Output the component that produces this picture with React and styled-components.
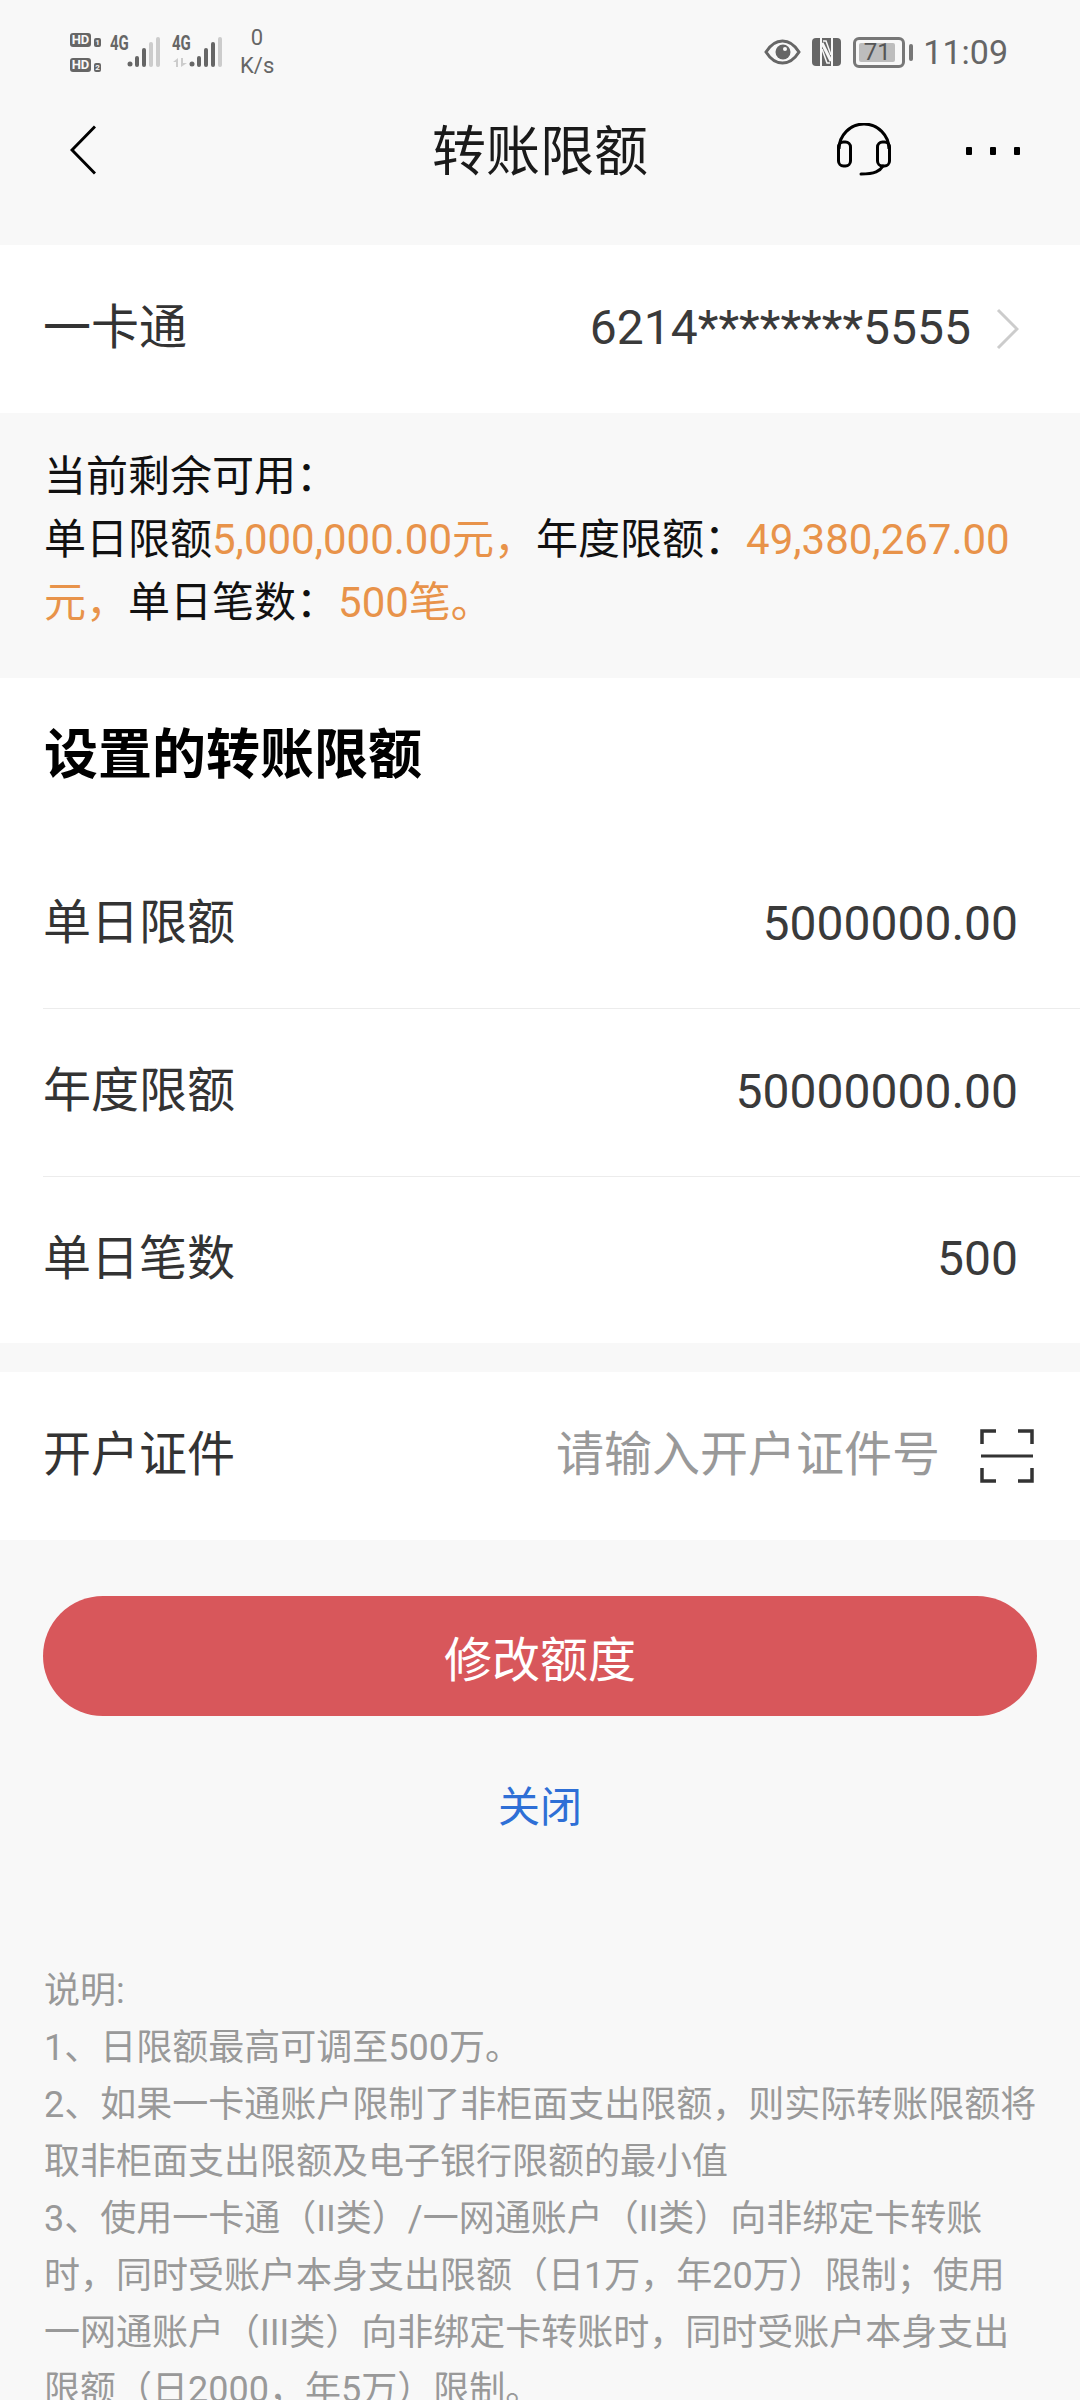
import React from "react";
import styled, { createGlobalStyle } from "styled-components";

const GlobalStyle = createGlobalStyle`
  html, body {
    margin: 0;
    padding: 0;
    background: #f8f8f8;
  }
  * {
    box-sizing: border-box;
  }
`;

const Page = styled.div`
  width: 1080px;
  height: 2400px;
  overflow: hidden;
  background: #f8f8f8;
  font-family: Roboto, "Noto Sans CJK SC", sans-serif;
  color: #333;
`;

/* status bar */
const StatusBar = styled.div`
  height: 92px;
  padding: 26px 72px 0 70px;
  display: flex;
  justify-content: space-between;
  align-items: flex-start;
  color: #666;
`;
const StatusLeft = styled.div`
  display: flex;
  align-items: flex-start;
`;
const StatusRight = styled.div`
  display: flex;
  align-items: center;
  height: 52px;
`;
const SimColumn = styled.div`
  display: flex;
  flex-direction: column;
  gap: 11px;
  margin-top: 7px;
`;
const SimRow = styled.div`
  display: flex;
  align-items: flex-end;
  gap: 3px;
`;
const HdBadge = styled.span`
  width: 21px;
  height: 14px;
  border-radius: 3px;
  background: #666;
  color: #f8f8f8;
  font: 700 13px/14px Roboto, sans-serif;
  text-align: center;
`;
const SimNumber = styled.span`
  width: 7px;
  height: 9px;
  border-radius: 2px;
  background: #666;
  color: #f8f8f8;
  font: 700 8px/9px Roboto, sans-serif;
  text-align: center;
`;
const Signal = styled.div`
  position: relative;
  width: 50px;
  height: 32px;
  margin-top: 10px;
  margin-left: ${(props) => props.$gap}px;
`;
const NetLabel = styled.span`
  position: absolute;
  left: 0;
  top: -2px;
  font: 700 20px/18px Roboto, sans-serif;
  transform: scaleX(0.75);
  transform-origin: left top;
`;
const SpeedBox = styled.div`
  width: 34px;
  margin-left: 18px;
  margin-top: -2px;
  text-align: center;
  font-size: 22px;
  line-height: 28px;
`;
const EyeSvg = styled.svg`
  margin-right: 11px;
`;
const NfcSvg = styled.svg`
  margin-right: 12px;
`;
const Battery = styled.div`
  width: 52px;
  height: 31px;
  border: 3px solid #777;
  border-radius: 6px;
  padding: 3px;
`;
const BatteryFill = styled.div`
  height: 100%;
  width: 36px;
  border-radius: 2px;
  background: #bdbdbd;
  font-size: 24px;
  line-height: 19px;
  text-align: center;
  color: #555;
`;
const BatteryNib = styled.div`
  width: 4px;
  height: 17px;
  margin-left: 4px;
  margin-right: 10px;
  border-radius: 2px;
  background: #777;
`;
const Clock = styled.span`
  font-size: 34px;
  line-height: 52px;
`;

/* nav */
const NavBar = styled.div`
  height: 153px;
  padding: 0 60px 0 70px;
  position: relative;
  display: flex;
  align-items: flex-start;
  justify-content: space-between;
`;
const NavTitle = styled.h1`
  position: absolute;
  left: 0;
  right: 0;
  top: 27px;
  margin: 0;
  text-align: center;
  font-size: 54px;
  line-height: 68px;
  font-weight: 400;
  color: #1a1a1a;
`;
const BackIcon = styled.svg`
  margin-top: 33px;
`;
const NavActions = styled.div`
  display: flex;
  align-items: flex-start;
  gap: 75px;
`;
const HeadsetIcon = styled.svg`
  margin-top: 31px;
`;
const MoreIcon = styled.svg`
  margin-top: 54px;
`;

/* rows */
const WhiteBlock = styled.div`
  background: #fff;
  margin-bottom: ${(props) => props.$gap || 0}px;
`;
const Row = styled.div`
  height: ${(props) => props.$height || 168}px;
  padding-right: 62px;
  margin-left: 43px;
  display: flex;
  align-items: center;
  justify-content: space-between;
  border-bottom: ${(props) => (props.$line ? "1px solid #ececec" : "0")};
`;
const RowLabel = styled.span`
  font-size: 48px;
  padding-bottom: 13px;
  color: #333;
`;
const RowValue = styled.span`
  font-size: 48px;
  padding-bottom: 3px;
  color: #3a3a3a;
`;
const RowEnd = styled.div`
  display: flex;
  align-items: center;
`;
const ChevronIcon = styled.svg`
  margin-left: 25px;
  margin-right: -1px;
`;
const Placeholder = styled.span`
  font-size: 48px;
  padding-bottom: 12px;
  color: #999;
`;
const ScanIcon = styled.svg`
  margin-left: 40px;
  margin-right: -16px;
`;

const InfoBlock = styled.div`
  height: 265px;
  padding: 32px 30px 0 44px;
  font-size: 42px;
  line-height: 63px;
  color: #111;
`;
const Orange = styled.span`
  color: #e8934a;
`;

const Heading = styled.h2`
  margin: 0;
  height: 163px;
  padding: 44px 0 0 44px;
  font-size: 54px;
  line-height: 68px;
  font-weight: 700;
  color: #000;
`;

const ActionArea = styled.div`
  padding: 56px 43px 0;
  display: flex;
  flex-direction: column;
  align-items: center;
`;
const PrimaryButton = styled.button`
  width: 994px;
  height: 120px;
  border: 0;
  border-radius: 60px;
  background: #d8575b;
  color: #fff;
  font-family: inherit;
  font-size: 48px;
`;
const CloseLink = styled.a`
  margin-top: 63px;
  font-size: 42px;
  line-height: 58px;
  color: #2e6fd6;
`;

const Notes = styled.div`
  padding: 126px 40px 0 44px;
  font-size: 36px;
  line-height: 57px;
  color: #999;
`;

export default function App() {
  return (
    <Page>
      <GlobalStyle />
      <StatusBar>
        <StatusLeft>
          <SimColumn>
            <SimRow>
              <HdBadge>HD</HdBadge>
              <SimNumber>1</SimNumber>
            </SimRow>
            <SimRow>
              <HdBadge>HD</HdBadge>
              <SimNumber>2</SimNumber>
            </SimRow>
          </SimColumn>
          <Signal $gap={9}>
            <NetLabel>4G</NetLabel>
            <svg width="50" height="32" viewBox="0 0 50 32">
              <circle cx="20" cy="28" r="2.5" fill="#666" />
              <rect x="25" y="20" width="4" height="11" rx="2" fill="#666" />
              <rect x="32" y="12" width="4" height="19" rx="2" fill="#666" />
              <rect x="39" y="6" width="4" height="25" rx="2" fill="#ccc" />
              <rect x="46" y="1" width="4" height="30" rx="2" fill="#ccc" />
            </svg>
          </Signal>
          <Signal $gap={12}>
            <NetLabel>4G</NetLabel>
            <svg width="50" height="32" viewBox="0 0 50 32">
              <path d="M1 26l5-4v9H4v-5zM9 22h2v5h4l-6 4z" fill="#ccc" />
              <circle cx="20" cy="28" r="2.5" fill="#666" />
              <rect x="25" y="20" width="4" height="11" rx="2" fill="#666" />
              <rect x="32" y="12" width="4" height="19" rx="2" fill="#666" />
              <rect x="39" y="6" width="4" height="25" rx="2" fill="#666" />
              <rect x="46" y="1" width="4" height="30" rx="2" fill="#ccc" />
            </svg>
          </Signal>
          <SpeedBox>
            0
            <br />
            K/s
          </SpeedBox>
        </StatusLeft>
        <StatusRight>
          <EyeSvg width="37" height="28" viewBox="0 0 37 28">
            <path d="M2 14C7 6 12 3 18.500 3S30 6 35 14c-5 8-10 11-16.500 11S7 22 2 14z" fill="none" stroke="#666" strokeWidth="3" />
            <circle cx="19" cy="14" r="7.500" fill="#666" />
            <circle cx="21" cy="11" r="2" fill="#f8f8f8" />
          </EyeSvg>
          <NfcSvg width="29" height="28" viewBox="0 0 29 28">
            <rect x="0" y="0" width="29" height="28" rx="4" fill="#666" />
            <path d="M8 0h2v28H8zM19 0h2v28h-2z" fill="#f8f8f8" />
            <path d="M10 5l9 18" stroke="#f8f8f8" strokeWidth="3" />
            <path d="M11 3h3l5 14M18 25h-3L10 11" stroke="#f8f8f8" strokeWidth="1.500" fill="none" />
          </NfcSvg>
          <Battery>
            <BatteryFill>71</BatteryFill>
          </Battery>
          <BatteryNib />
          <Clock>11:09</Clock>
        </StatusRight>
      </StatusBar>

      <NavBar>
        <NavTitle>转账限额</NavTitle>
        <BackIcon width="26" height="50" viewBox="0 0 26 50">
          <path d="M25 1.500L2 25l23 23.500" fill="none" stroke="#000" strokeWidth="3" />
        </BackIcon>
        <NavActions>
          <HeadsetIcon width="54" height="54" viewBox="0 0 54 54">
            <path d="M2 26a25 25 0 0 1 50 0" fill="none" stroke="#000" strokeWidth="3" />
            <rect x="1.500" y="19" width="12" height="24" rx="5" fill="none" stroke="#000" strokeWidth="3" />
            <rect x="40.500" y="19" width="12" height="24" rx="5" fill="none" stroke="#000" strokeWidth="3" />
            <path d="M46 43c-3 5-8 8-22 8" fill="none" stroke="#000" strokeWidth="3" strokeLinecap="round" />
          </HeadsetIcon>
          <MoreIcon width="54" height="10" viewBox="0 0 54 10">
            <rect x="0" y="1" width="6" height="8" rx="1" fill="#000" />
            <rect x="24" y="1" width="6" height="8" rx="1" fill="#000" />
            <rect x="48" y="1" width="6" height="8" rx="1" fill="#000" />
          </MoreIcon>
        </NavActions>
      </NavBar>

      <WhiteBlock>
        <Row>
          <RowLabel>一卡通</RowLabel>
          <RowEnd>
            <RowValue>6214********5555</RowValue>
            <ChevronIcon width="23" height="42" viewBox="0 0 23 42">
              <path d="M2 2l19 19L2 40" fill="none" stroke="#ccc" strokeWidth="3" />
            </ChevronIcon>
          </RowEnd>
        </Row>
      </WhiteBlock>

      <InfoBlock>
        当前剩余可用：
        <br />
        单日限额<Orange>5,000,000.00元，</Orange>年度限额：<Orange>49,380,267.00元，</Orange>单日笔数：<Orange>500笔。</Orange>
      </InfoBlock>

      <WhiteBlock $gap={29}>
        <Heading>设置的转账限额</Heading>
        <Row $line>
          <RowLabel>单日限额</RowLabel>
          <RowValue>5000000.00</RowValue>
        </Row>
        <Row $line>
          <RowLabel>年度限额</RowLabel>
          <RowValue>50000000.00</RowValue>
        </Row>
        <Row $height={166}>
          <RowLabel>单日笔数</RowLabel>
          <RowValue>500</RowValue>
        </Row>
      </WhiteBlock>

      <WhiteBlock>
        <Row>
          <RowLabel>开户证件</RowLabel>
          <RowEnd>
            <Placeholder>请输入开户证件号</Placeholder>
            <ScanIcon width="54" height="54" viewBox="0 0 54 54">
              <path d="M2 15V2h14M38 2h14v13M2 39v13h14M38 52h14V39" fill="none" stroke="#333" strokeWidth="3.500" />
              <path d="M1 27h52" stroke="#333" strokeWidth="3" />
            </ScanIcon>
          </RowEnd>
        </Row>
      </WhiteBlock>

      <ActionArea>
        <PrimaryButton type="button">修改额度</PrimaryButton>
        <CloseLink>关闭</CloseLink>
      </ActionArea>

      <Notes>
        说明:
        <br />
        1、日限额最高可调至500万。
        <br />
        2、如果一卡通账户限制了非柜面支出限额，则实际转账限额将取非柜面支出限额及电子银行限额的最小值
        <br />
        3、使用一卡通（II类）/一网通账户（II类）向非绑定卡转账时，同时受账户本身支出限额（日1万，年20万）限制；使用一网通账户（III类）向非绑定卡转账时，同时受账户本身支出限额（日2000，年5万）限制。
      </Notes>
    </Page>
  );
}
